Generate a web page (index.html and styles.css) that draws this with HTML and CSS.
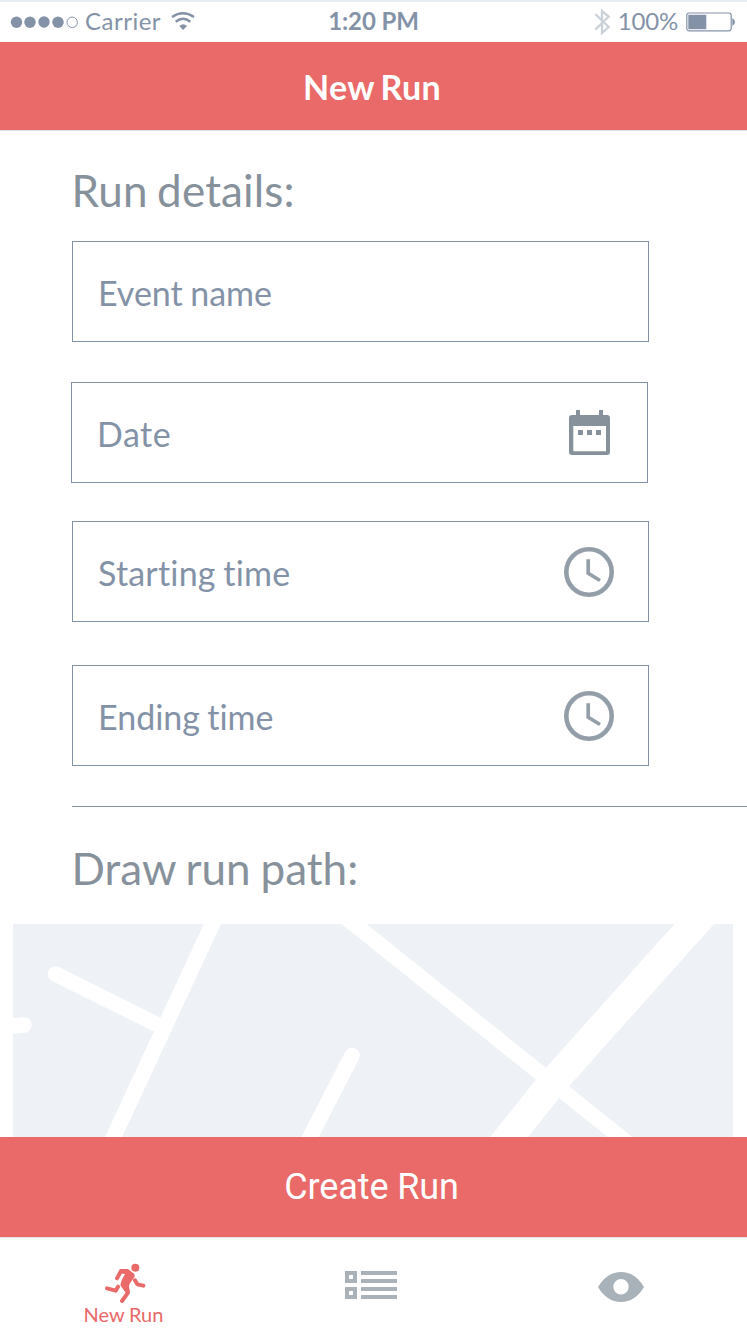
FILE: index.html
```html
<!DOCTYPE html>
<html lang="en">
<head>
<meta charset="utf-8">
<title>New Run</title>
<link rel="stylesheet" href="styles.css">
</head>
<body>
<div class="screen">
  <div class="status">
    <div class="status-left">
      <svg class="signal" width="69" height="14" viewBox="0 0 69 14"><circle cx="6.5" cy="7.3" r="5.7"/><circle cx="20" cy="7.3" r="5.7"/><circle cx="34" cy="7" r="5.7"/><circle cx="48" cy="7.2" r="5.7"/><circle class="hollow" cx="62.2" cy="7.3" r="5.2"/></svg>
      <span class="carrier">Carrier</span>
      <svg class="wifi" width="24" height="19" viewBox="0 0 72 57"><path d="M3 15Q36-7 69 15"/><path d="M14 29Q36 12 58 29"/><path class="solid" d="M25 42Q36 32 48 42L36 54Z"/></svg>
    </div>
    <span class="clock">1:20 PM</span>
    <div class="status-right">
      <svg class="bluetooth" width="17" height="28" viewBox="0 0 51 84"><path d="M4 18L44 57L24 75V9L44 26L4 65"/></svg>
      <span class="percent">100%</span>
      <svg class="battery" width="50" height="20" viewBox="0 0 50 20"><rect class="case" x=".8" y="1" width="44.4" height="17.8" rx="2.2"/><rect x="2.3" y="2.8" width="18" height="14.4"/><path d="M46.3 6q2.7 1.5 2.7 4t-2.7 4z"/></svg>
    </div>
  </div>
  <header class="navbar">New Run</header>
  <main class="content">
    <h2 class="heading">Run details:</h2>
    <div class="field"><span class="label-name">Event name</span></div>
    <div class="field field-date"><span class="label-date">Date</span>
      <svg class="calendar" width="42" height="46" viewBox="0 0 42 46"><path fill-rule="evenodd" d="M7 0h4v5h19V0h4v5h4q3 0 3 3v34q0 3-3 3H3q-3 0-3-3V8q0-3 3-3h4zM4.3 16v25.2H37V16zM9 20h5v5H9zM18 20h5v5h-5zM27 20h5v5h-5z"/></svg>
    </div>
    <div class="field field-start"><span class="label-start">Starting time</span>
      <svg class="time" width="50" height="50" viewBox="0 0 50 50"><circle cx="25" cy="25" r="22.7"/><path d="M24.2 12.3v14L36 33.5"/></svg>
    </div>
    <div class="field field-end"><span class="label-end">Ending time</span>
      <svg class="time" width="50" height="50" viewBox="0 0 50 50"><circle cx="25" cy="25" r="22.7"/><path d="M24.2 12.3v14L36 33.5"/></svg>
    </div>
    <hr class="divider">
    <h2 class="heading heading-map">Draw run path:</h2>
  </main>
  <svg class="map" width="720" height="213" viewBox="13 924 720 213">
    <path class="road" d="M0 1027.5L24 1025M55.5 974L160 1026M218 912L108 1149M352 1055.5L304 1149"/>
    <path class="road" d="M339 912L635 1149"/>
    <path class="avenue" d="M705 912L553 1082L494 1156"/>
  </svg>
  <button class="create">Create Run</button>
  <nav class="tabs">
    <a class="tab active">
      <svg class="runner" width="45" height="42" viewBox="99 96 135 126"><circle class="solid" cx="196" cy="113" r="12"/><path class="solid" d="M150 117L174 117L193 132L194 140L179 161L177 169L180 187L166 187L151 166L155 150L165 132L150 130Z"/><path class="limb" d="M141 145L153 123L168 123M111 175L137 182L144 170M165 166L174 188L156 213M195 151L202 163L220 167"/></svg>
      <span>New Run</span>
    </a>
    <a class="tab"><svg class="list" width="52" height="28" viewBox="0 0 52 28"><path fill-rule="evenodd" d="M0 0h12v12H0zM4 4v4h4V4zM0 16h12v12H0zM4 20v4h4v-4zM16 0h36v4H16zM16 8h36v4H16zM16 16h36v4H16zM16 24h36v4H16z"/></svg></a>
    <a class="tab"><svg class="eye" width="46" height="30" viewBox="0 0 46 30"><path fill-rule="evenodd" d="M0 15Q9 0 23 0T46 15Q37 30 23 30T0 15ZM15.3 14.8a7.7 7.7 0 1 0 15.4 0a7.7 7.7 0 1 0-15.4 0Z"/></svg></a>
  </nav>
</div>
</body>
</html>
```
FILE: styles.css
```css
* { box-sizing: border-box; }
body { margin: 0; background: #fff; font-family: Lato, sans-serif; font-variant-ligatures: none; color: #8492a8; }
svg { display: block; flex: none; }
.screen { width: 747px; height: 1334px; display: flex; flex-direction: column; overflow: hidden; }

.status { height: 42px; flex: none; border-top: 2px solid #e9eef3; display: grid; grid-template-columns: 1fr auto 1fr; align-items: center; font-size: 24px; line-height: 38px; padding-bottom: 2px; }
.status-left { display: flex; align-items: center; padding-left: 10px; }
.status-right { display: flex; align-items: center; justify-content: flex-end; padding-right: 11px; }
.signal { fill: #8492a8; margin: 2px 6px 0 0; }
.signal .hollow { fill: none; stroke: #8492a8; }
.carrier { letter-spacing: .5px; margin-right: 10px; }
.wifi { fill: none; stroke: #8492a8; stroke-width: 7.5; }
.wifi .solid { fill: #8492a8; stroke: none; }
.clock { font-weight: 700; letter-spacing: -.1px; }
.bluetooth { fill: none; stroke: #ccd2d9; stroke-width: 7; margin: 2px 7px 0 0; }
.percent { letter-spacing: -.2px; margin-right: 8px; }
.battery { fill: #8492a8; margin-top: 1px; }
.battery .case { fill: none; stroke: #8492a8; stroke-width: 1.2; }

.navbar { height: 89px; flex: none; background: #e96a68; border-bottom: 1px solid #d9dfea; color: #fff; font-size: 34px; font-weight: 700; line-height: 90px; text-align: center; padding-right: 3px; letter-spacing: .3px; word-spacing: -2px; }

.content { height: 793px; flex: none; padding: 33px 0 0 72px; }
.heading { margin: 0 0 25px -.5px; font-size: 44px; line-height: 52px; font-weight: 400; color: #87919c; letter-spacing: .15px; word-spacing: -2px; }
.heading-map { letter-spacing: 0; word-spacing: -1.3px; }
.field { width: 577px; height: 101px; border: 1px solid #8492a5; padding: 0 34px 0 25px; display: flex; align-items: center; justify-content: space-between; font-size: 34px; line-height: 48px; }
.field span { padding-top: 2px; }
.label-name { word-spacing: -1.3px; }
.label-date { letter-spacing: .5px; }
.label-start { letter-spacing: .2px; word-spacing: -1.3px; }
.label-end { word-spacing: -1.5px; }
.field-date { margin: 40px 0 0 -1px; padding-right: 36px; }
.field-start { margin-top: 38px; }
.field-end { margin-top: 43px; }
.calendar { fill: #87919c; }
.time { fill: none; stroke: #949ea8; stroke-width: 4.6; }
.time path { stroke-width: 3.7; }
.divider { height: 1px; margin: 40px 0 35px; border: 0; background: #8492a0; }

.map { background: #eef1f6; margin-left: 13px; fill: none; stroke: #fff; }
.road { stroke-width: 15.5; stroke-linecap: round; }
.avenue { stroke-width: 29.5; stroke-linejoin: round; }

.create { height: 100px; flex: none; border: 0; padding: 0 4px 0 0; background: #e96a68; color: #fff; font: 400 36px/100px Roboto, sans-serif; letter-spacing: -.1px; }

.tabs { height: 97px; flex: none; border-top: 1px solid #e3e4e6; display: grid; grid-template-columns: 247px 248px 252px; }
.tab { display: flex; flex-direction: column; align-items: center; fill: #a9b1b9; }
.list { margin-top: 33px; }
.eye { margin-top: 34px; }
.runner { margin: 24px 0 0 4px; fill: none; stroke: #e96a68; }
.runner .solid { fill: #e96a68; stroke: none; }
.limb { stroke-width: 12; stroke-linecap: round; stroke-linejoin: round; }
.active { color: #e96a68; font-size: 20px; line-height: 20px; word-spacing: -.4px; }
```
